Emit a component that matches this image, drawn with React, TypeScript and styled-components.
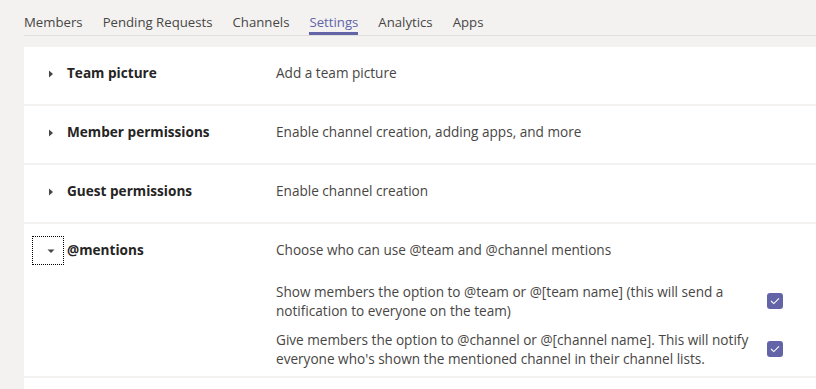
import React from "react";
import styled, {createGlobalStyle} from "styled-components";

const GlobalStyle = createGlobalStyle`
  html, body {
    margin: 0;
    padding: 0;
    background-color: #f3f2f1;
    overflow: hidden;
  }
  body {
    font-family: "Segoe UI", "Open Sans", "Noto Sans", sans-serif;
    font-size: 13.6px;
    color: #252423;
  }
`;

const Page = styled.div`
  width: 816px;
  height: 389px;
  padding-left: 24px;
  box-sizing: border-box;
`;

const TabBar = styled.div`
  display: flex;
  gap: 20px;
  border-bottom: 1px solid #e1dfdd;
`;

const Tab = styled.div<{ $active?: boolean }>`
  padding-top: 12px;
  line-height: 20px;
  font-size: 13.2px;
  border-bottom: 3px solid ${(p) => (p.$active ? "#6264a7" : "transparent")};
  color: ${(p) => (p.$active ? "#6264a7" : "#484644")};
  white-space: nowrap;
`;

const Card = styled.div`
  margin-top: 11px;
  display: flex;
  flex-direction: column;
  gap: 2px;
`;

const Section = styled.div<{ $open?: boolean }>`
  background-color: #ffffff;
  padding: 12px 33px ${(p) => (p.$open ? "8px" : "16px")} 8px;
  display: grid;
  grid-template-columns: 32px 206px 1fr;
  column-gap: 3px;
  min-height: 29px;
`;

const Toggle = styled.div<{ $focused?: boolean }>`
  width: 32px;
  height: 29px;
  box-sizing: border-box;
  display: flex;
  align-items: center;
  justify-content: center;
  padding-left: 6px;
  outline: ${(p) => (p.$focused ? "1px dotted #000000" : "none")};
  outline-offset: -1px;
`;

const Title = styled.div`
  font-weight: 700;
  line-height: 28px;
  color: #252423;
`;

const Body = styled.div`
  display: flex;
  flex-direction: column;
`;

const Description = styled.div`
  line-height: 28px;
  color: #484644;
`;

const Options = styled.div`
  margin-top: 18px;
  display: flex;
  flex-direction: column;
  gap: 10px;
`;

const OptionRow = styled.div`
  display: flex;
  align-items: center;
  justify-content: space-between;
`;

const OptionText = styled.div`
  width: 478px;
  line-height: 19px;
  color: #484644;
`;

const Check = styled.div`
  width: 16px;
  height: 16px;
  border-radius: 3px;
  background-color: #6264a7;
  display: flex;
  align-items: center;
  justify-content: center;
`;

const Chevron = ({open}: { open?: boolean }) =>
  open ? (
    <svg width="8" height="8" viewBox="0 0 8 8">
      <polygon points="0.5,2.5 7.5,2.5 4,6" fill="#484644"/>
    </svg>
  ) : (
    <svg width="8" height="8" viewBox="0 0 8 8">
      <polygon points="2,0.5 6,4 2,7.5" fill="#484644"/>
    </svg>
  );

const CheckMark = () => (
  <svg width="10" height="8" viewBox="0 0 10 8">
    <polyline points="1,4 3.8,6.6 9,1.3" fill="none" stroke="#ffffff" strokeWidth="1.1"/>
  </svg>
);

const tabs = ["Members", "Pending Requests", "Channels", "Settings", "Analytics", "Apps"];

const sections = [
  {title: "Team picture", desc: "Add a team picture"},
  {title: "Member permissions", desc: "Enable channel creation, adding apps, and more"},
  {title: "Guest permissions", desc: "Enable channel creation"},
];

const mentionOptions = [
  "Show members the option to @team or @[team name] (this will send a notification to everyone on the team)",
  "Give members the option to @channel or @[channel name]. This will notify everyone who's shown the mentioned channel in their channel lists.",
];

const App: React.FC = () => {
  return (
    <Page>
      <GlobalStyle/>
      <TabBar>
        {tabs.map((t) => (
          <Tab key={t} $active={t === "Settings"}>{t}</Tab>
        ))}
      </TabBar>
      <Card>
        {sections.map((s) => (
          <Section key={s.title}>
            <Toggle><Chevron/></Toggle>
            <Title>{s.title}</Title>
            <Description>{s.desc}</Description>
          </Section>
        ))}
        <Section $open>
          <Toggle $focused><Chevron open/></Toggle>
          <Title>@mentions</Title>
          <Body>
            <Description>Choose who can use @team and @channel mentions</Description>
            <Options>
              {mentionOptions.map((o) => (
                <OptionRow key={o}>
                  <OptionText>{o}</OptionText>
                  <Check><CheckMark/></Check>
                </OptionRow>
              ))}
            </Options>
          </Body>
        </Section>
        <Section/>
      </Card>
    </Page>
  );
};

export default App;
